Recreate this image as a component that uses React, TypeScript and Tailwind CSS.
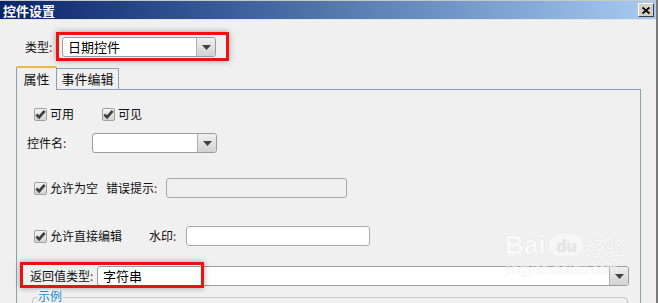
import React from "react";

const font = { fontFamily: '"Noto Sans CJK SC", "Liberation Sans", sans-serif' };

function Check() {
  return (
    <span className="inline-flex items-center justify-center w-[13px] h-[13px] rounded-[2px] border border-[#a0a0a0] bg-gradient-to-b from-[#f4f4f4] to-[#d4d4d4] shrink-0">
      <svg width="12" height="11" viewBox="0 0 12 11">
        <path d="M1.5 5.5 L4.5 8.5 L10.5 1.5" fill="none" stroke="#404040" strokeWidth="3" strokeLinejoin="miter" />
      </svg>
    </span>
  );
}

function DropButton() {
  return (
    <span className="flex items-center justify-center w-[19px] h-full border-l border-[#b0b0b0] bg-gradient-to-b from-[#f0f0f0] to-[#d2d2d2] rounded-r-[3px]">
      <svg width="9" height="5" viewBox="0 0 9 5">
        <path d="M0 0 H9 L4.5 5 Z" fill="#404040" />
      </svg>
    </span>
  );
}

function Select({ w, text }: { w: string; text?: string }) {
  return (
    <div className={`flex h-[20px] ${w} bg-white border border-[#9c9c9c] rounded-[3px] overflow-hidden`}>
      <div className="flex-1 flex items-center pl-[5px] text-[13px] text-black">{text}</div>
      <DropButton />
    </div>
  );
}

function Colon() {
  return <span className="text-[#8b1a1a]">:</span>;
}

export default function App() {
  return (
    <div style={font} className="relative w-[658px] h-[303px] bg-[#f0f0f0] overflow-hidden text-[12px] text-[#111] border-r-2 border-[#7a7a7a]">
      {/* 标题栏 */}
      <div className="flex items-center justify-between h-[20px] border-t border-[#c8c8c8] border-b border-b-[#e4e4e4] bg-gradient-to-r from-[#0a246a] to-[#a8ccf2] pl-[3px] pr-[2px]">
        <span className="text-white font-bold text-[13px] leading-none">控件设置</span>
        <span className="flex items-center justify-center w-[16px] h-[14px] bg-[#d4d0c8] border border-t-white border-l-white border-r-[#404040] border-b-[#404040]">
          <svg width="8" height="7" viewBox="0 0 8 7">
            <path d="M0.5 0.5 L7.5 6.5 M7.5 0.5 L0.5 6.5" stroke="#000" strokeWidth="1.8" />
          </svg>
        </span>
      </div>

      {/* 类型 */}
      <div className="relative flex items-center mt-[17px] pl-[25px] h-[20px]">
        <span className="w-[37px]">类型<Colon /></span>
        <Select w="w-[154px]" text="日期控件" />
        <div className="absolute left-[56px] top-[-5px] w-[173px] h-[29px] border-[3px] border-[#f01010] shadow-[0_0_6px_rgba(0,0,0,0.35)]" />
      </div>

      {/* 选项卡 */}
      <div className="flex items-end ml-[16px] mt-[8px] h-[24px]">
        <div className="w-[41px] h-[24px] flex items-center justify-center text-[13px] bg-[#f0f0f0] border border-b-0 border-[#8d9fb7] border-t-2 border-t-[#f0b840] rounded-t-[2px] relative z-10 -mb-px pb-px">
          属性
        </div>
        <div className="w-[62px] h-[21px] flex items-center justify-center text-[13px] border border-l-0 border-b-0 border-[#8d9fb7]">
          事件编辑
        </div>
      </div>

      {/* 面板 */}
      <div className="ml-[16px] w-[625px] h-[230px] border border-[#8d9fb7] border-b-0">
        <div className="flex items-center pt-[17px] pl-[17px] h-[31px]">
          <Check />
          <span className="ml-[3px] w-[52px]">可用</span>
          <Check />
          <span className="ml-[3px]">可见</span>
        </div>

        <div className="flex items-center mt-[12px] pl-[10px] h-[20px]">
          <span className="w-[65px]">控件名<Colon /></span>
          <Select w="w-[125px]" />
        </div>

        <div className="flex items-center mt-[25px] pl-[17px] h-[20px]">
          <Check />
          <span className="ml-[3px] w-[56px]">允许为空</span>
          <span className="w-[60px]">错误提示<Colon /></span>
          <div className="w-[181px] h-[20px] bg-[#f0f0f0] border border-[#a8a8a8] rounded-[3px]" />
        </div>

        <div className="flex items-center mt-[28px] pl-[17px] h-[20px]">
          <Check />
          <span className="ml-[3px] w-[99px]">允许直接编辑</span>
          <span className="w-[37px]">水印<Colon /></span>
          <div className="w-[184px] h-[20px] bg-white border border-[#a8a8a8] rounded-[3px]" />
        </div>

        <div className="relative flex items-center mt-[20px] pl-[13px] h-[20px]">
          <span className="w-[67px]">返回值类型<Colon /></span>
          <Select w="w-[532px]" text="字符串" />
          <div className="absolute left-[3px] top-[-4px] w-[184px] h-[26px] border-[3px] border-[#f01010] shadow-[0_0_6px_rgba(0,0,0,0.35)]" />
        </div>

        <div className="relative mt-[11px] ml-[15px] w-[596px] h-[20px] border border-[#c8c8c8] rounded-[4px]">
          <span className="absolute left-[4px] top-[-8px] bg-[#f0f0f0] px-px text-[#1a8ad0] leading-none">示例</span>
        </div>
      </div>

      {/* 水印 */}
      <div className="absolute left-[505px] top-[232px] text-white leading-none opacity-60 [text-shadow:0_0_1px_#c8c8c8]">
        <div className="flex items-end">
          <span className="text-[26px] font-bold" style={{ fontFamily: '"Liberation Sans", sans-serif' }}>Bai</span>
          <span className="ml-[4px] mb-[2px] w-[34px] h-[22px] rounded-full bg-white/70 text-[#e0e0e0] text-[16px] font-bold flex items-center justify-center">du</span>
          <span className="ml-[2px] text-[20px]">经验</span>
        </div>
        <div className="mt-[4px] text-[14px]" style={{ fontFamily: '"Liberation Sans", sans-serif' }}>jingyan.baidu.com</div>
      </div>
    </div>
  );
}
